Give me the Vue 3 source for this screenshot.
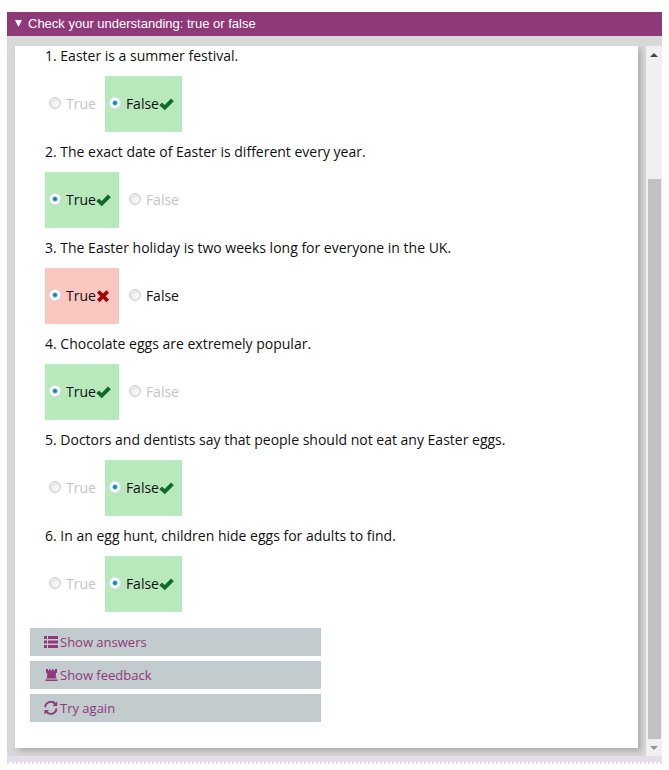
<script setup>
import { ref, reactive } from 'vue'

const open = ref(true)
const questions = reactive([
  { text: 'Easter is a summer festival.', answer: 'False', chosen: 'False' },
  { text: 'The exact date of Easter is different every year.', answer: 'True', chosen: 'True' },
  { text: 'The Easter holiday is two weeks long for everyone in the UK.', answer: 'False', chosen: 'True' },
  { text: 'Chocolate eggs are extremely popular.', answer: 'True', chosen: 'True' },
  { text: 'Doctors and dentists say that people should not eat any Easter eggs.', answer: 'False', chosen: 'False' },
  { text: 'In an egg hunt, children hide eggs for adults to find.', answer: 'False', chosen: 'False' },
])

function state(q, option) {
  if (q.chosen === option) return option === q.answer ? 'right' : 'wrong'
  return option === q.answer ? '' : 'faded'
}
</script>

<template>
  <main class="quiz">
    <button class="bar" type="button" :aria-expanded="open" @click="open = !open">
      <svg class="arrow" viewBox="0 0 7 9"><path d="M0 0h7L3.5 7z" /></svg>
      Check your understanding: true or false
    </button>
    <div v-if="open" class="body">
      <div class="surface">
        <section class="card">
          <div class="questions">
            <div v-for="(q, i) in questions" :key="i" class="question" role="radiogroup" :aria-labelledby="'q' + i">
              <p :id="'q' + i" class="prompt">{{ i + 1 }}. {{ q.text }}</p>
              <div class="options">
                <label v-for="option in ['True', 'False']" :key="option" class="option" :class="state(q, option)">
                  <input v-model="q.chosen" type="radio" :name="'question' + i" :value="option" />
                  <span>{{ option }}</span>
                  <svg v-if="state(q, option) === 'right'" class="mark" viewBox="0 0 15 14">
                    <path fill="#10682a" d="M.3 8.2 3 5.5l2.7 2.6L12 1.4 14.8 4.200 5.800 13.300z" />
                  </svg>
                  <svg v-if="state(q, option) === 'wrong'" class="mark" viewBox="0 0 15 14">
                    <path fill="#a30505" d="M3.6 1.2 7 4.6l3.4-3.4L13 3.8 9.6 7.2l3.4 3.4-2.6 2.6L7 9.8l-3.4 3.4L1 10.6l3.4-3.4L1 3.8z" />
                  </svg>
                </label>
              </div>
            </div>
          </div>
          <div class="actions">
            <button type="button">
              <svg viewBox="0 0 14 14"><path d="M0 1h3v3H0zM4 1h10v3H4zM0 5.5h3v3H0zM4 5.5h10v3H4zM0 10h3v3H0zM4 10h10v3H4z" /></svg>
              Show answers
            </button>
            <button type="button">
              <svg viewBox="0 0 14 14"><path d="M2 1h2v1.500h1.300V1h1.400v1.500h1.600V1h1.400v1.500H11V1h2v3.500l-1.200 1V9l1.200 1.500H2L3.200 9V5.500L2 4.500zM1.500 11.500h12V13h-12z" /></svg>
              Show feedback
            </button>
            <button type="button">
              <svg viewBox="0 0 14 14">
                <path fill="none" stroke="currentColor" stroke-width="1.900" d="M1.200 6.200A5.600 5.600 0 0 1 11.200 2.900M12.400 7.400A5.600 5.600 0 0 1 2.400 10.700" />
                <path d="M13.200.2v4.700H8.500zM.4 13.600V8.900h4.700z" />
              </svg>
              Try again
            </button>
          </div>
        </section>
      </div>
      <div class="scroll" aria-hidden="true">
        <svg class="up" viewBox="0 0 8 4"><path d="M0 4 4 0l4 4z" /></svg>
        <span class="thumb"></span>
        <svg class="down" viewBox="0 0 8 4"><path d="M0 0h8L4 4z" /></svg>
      </div>
    </div>
    <div class="foot"></div>
  </main>
</template>

<style>
body {
  margin: 0;
  background: #fff;
}
</style>

<style scoped>
.quiz {
  padding: 12px 7px 6px;
  font: 14px/20px "Open Sans", "Noto Sans", sans-serif;
  color: #111;
}
.bar {
  display: flex;
  align-items: center;
  gap: 6px;
  width: 100%;
  height: 24px;
  padding: 0 8px;
  border: 0;
  background: #8f387a;
  color: #fff;
  font: 13px/24px "Liberation Sans", Arial, sans-serif;
}
.arrow {
  width: 7px;
  height: 9px;
  fill: #fff;
}
.body {
  display: flex;
  padding-top: 10px;
  background: #d9d8d9;
}
.surface {
  flex: 1;
  padding: 0 8px 8px;
  overflow: hidden;
}
.card {
  padding: 0 15px 26px;
  background: #fff;
  box-shadow: 3px 3px 6px #aaa;
}
.questions {
  padding-left: 15px;
}
.prompt {
  margin: 0;
  padding: 10px 0;
}
.question:first-child .prompt {
  padding-top: 0;
}
.options {
  display: flex;
  gap: 6px;
}
.option {
  display: flex;
  align-items: center;
  height: 56px;
  padding: 0 3px 0 4px;
}
.option.right {
  background: #b8e9bd;
}
.option.wrong {
  background: #f9c6c0;
}
.option.faded {
  color: #c5c5c5;
}
.option input {
  appearance: none;
  box-sizing: border-box;
  width: 12px;
  height: 12px;
  margin: 0 5px 2px 0;
  border: 1px solid #d0d0d0;
  border-radius: 50%;
  background: radial-gradient(circle at 65% 65%, #fafafa, #dedede);
}
.option input:checked {
  border-color: #dde8ea;
  background: radial-gradient(circle, #1b7fae 0 1px, #4aa3cc 2px, #fff 3px);
}
.mark {
  width: 15px;
  height: 14px;
  margin-right: 5px;
}
.actions {
  display: grid;
  gap: 5px;
  width: 49%;
  padding-top: 16px;
}
.actions button {
  display: flex;
  align-items: center;
  gap: 2px;
  height: 28px;
  padding: 0 14px;
  border: 0;
  background: #c2cbce;
  color: #8f387a;
  font: inherit;
  font-size: 13px;
}
.actions svg {
  width: 14px;
  height: 14px;
  fill: currentColor;
}
.scroll {
  display: grid;
  grid-template-rows: 17px 116fr 560fr 17px;
  justify-items: center;
  align-items: center;
  width: 16px;
  background: #f0f0f0;
}
.scroll svg {
  width: 8px;
  height: 4px;
  fill: #444;
}
.scroll .down {
  grid-row: 4;
  fill: #909090;
}
.thumb {
  grid-row: 3;
  align-self: stretch;
  width: 13px;
  background: #c1c1c1;
}
.foot {
  height: 6px;
  border-bottom: 2px dotted #e4deec;
  background: #e4deec;
  background-clip: padding-box;
}
</style>
